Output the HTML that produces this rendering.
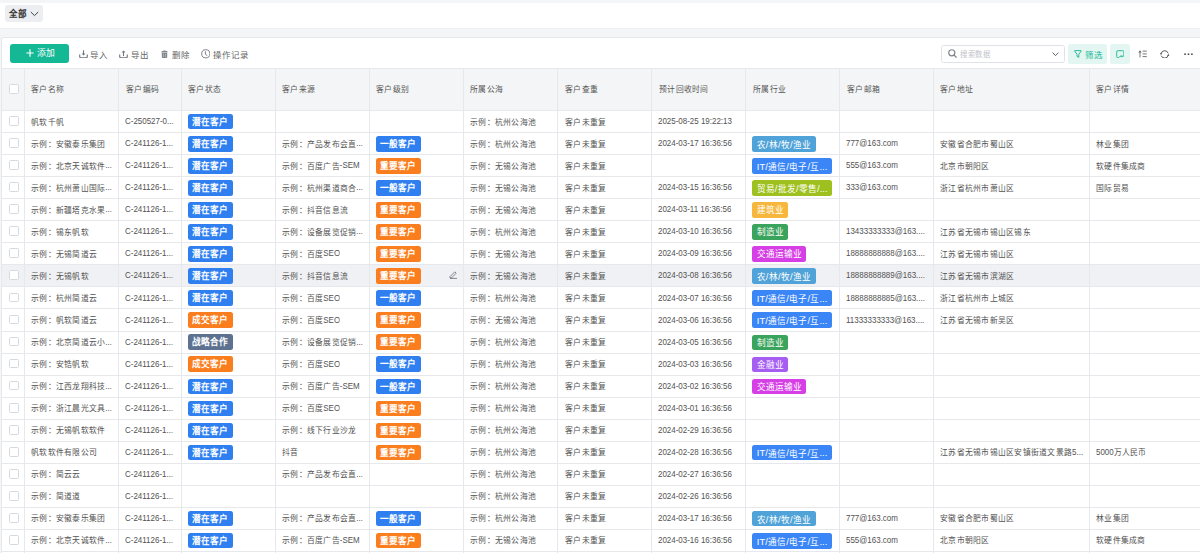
<!DOCTYPE html><html lang="zh-CN"><head><meta charset="utf-8"><style>
*{box-sizing:border-box;margin:0;padding:0}
html,body{width:1200px;height:553px;overflow:hidden;background:#f4f5f7;font-family:"Liberation Sans",sans-serif;}
.abs{position:absolute}
#top{position:absolute;left:0;top:2.5px;width:1200px;height:25.7px;background:#fff}
#all{position:absolute;left:4.6px;top:4.5px;width:38.2px;height:17.7px;background:#eceef2;border-radius:3px;font-size:8.6px;color:#222;}
#all span{position:absolute;left:4.6px;top:2.4px;font-weight:bold;color:#333;letter-spacing:0px}
#card{position:absolute;left:1px;top:37.4px;width:1250px;height:600px;background:#fff;border:1px solid #e6e8eb;border-radius:3px}
.tb{position:absolute;font-size:8.5px;color:#666;white-space:nowrap}
.cell{position:absolute;font-size:8.5px;transform:scaleX(0.917);transform-origin:0 0;color:#525252;white-space:nowrap;overflow:hidden}
.hd{position:absolute;font-size:8.5px;transform:scaleX(0.917);transform-origin:0 0;color:#555;white-space:nowrap}
.vl{position:absolute;width:1px;background:#e6e8eb}
.hl{position:absolute;height:1px;background:#e6e8eb;left:2px;width:1200px}
.tag{position:absolute;height:15.6px;border-radius:2.5px;color:#fff;font-size:8.6px;white-space:nowrap;padding:0 4.2px 0 4.6px;overflow:hidden;font-weight:bold}
.itag{position:absolute;height:15.6px;border-radius:2.5px;color:#fff;font-size:8.6px;white-space:nowrap;padding:0 4.6px;overflow:hidden;font-weight:normal}
.a{display:inline-block;white-space:nowrap}
.itag .a{margin:0 0.25px}
.ai{display:inline-block;transform-origin:0 0;white-space:nowrap;position:relative;top:-0.4px}
.cb{position:absolute;left:9.2px;width:9.8px;height:9.8px;border:1px solid #d6d9de;border-radius:1.5px;background:#fff}
</style></head><body>
<div id="top"></div><div class="abs" style="left:0;top:28.2px;width:1200px;height:1.2px;background:#eeeff2"></div>
<div id="all"><span>全部</span>
<svg class="abs" style="left:25.6px;top:6.6px" width="9" height="6" viewBox="0 0 9 6"><path d="M0.8 1 L4.5 4.6 L8.2 1" fill="none" stroke="#444" stroke-width="1"/></svg>
</div>
<div id="card"></div>

<div class="abs" style="left:9.7px;top:43.6px;width:59.5px;height:19.3px;background:#14b895;border-radius:3px"></div>
<svg class="abs" style="left:26px;top:49px" width="8" height="8" viewBox="0 0 8 8"><path d="M4 0.3V7.7M0.3 4H7.7" stroke="#fff" stroke-width="1.15"/></svg>
<div class="tb" style="left:37.2px;top:44.2px;height:18.9px;line-height:18.9px;color:#fff;font-size:8.8px">添加</div>
<svg class="abs" style="left:78.8px;top:49.6px" width="9" height="8.6" viewBox="0 0 9 8.6"><path d="M0.7 4.6V6.6Q0.7 7.9 2 7.9H7Q8.3 7.9 8.3 6.6V4.6" fill="none" stroke="#70757d" stroke-width="1.1"/><path d="M4.5 0.3V4" stroke="#70757d" stroke-width="1.1"/><path d="M2.5 3.4L4.5 5.6L6.5 3.4Z" fill="#70757d"/></svg>
<div class="tb" style="left:90.3px;top:45.6px;line-height:19px">导入</div>
<svg class="abs" style="left:119.2px;top:49.6px" width="9" height="8.6" viewBox="0 0 9 8.6"><path d="M0.7 4.6V6.6Q0.7 7.9 2 7.9H7Q8.3 7.9 8.3 6.6V4.6" fill="none" stroke="#70757d" stroke-width="1.1"/><path d="M4.5 6V2.2" stroke="#70757d" stroke-width="1.1"/><path d="M2.5 2.6L4.5 0.4L6.5 2.6Z" fill="#70757d"/></svg>
<div class="tb" style="left:130.8px;top:45.6px;line-height:19px">导出</div>
<svg class="abs" style="left:161.2px;top:50px" width="7" height="8.2" viewBox="0 0 7 8.2"><path d="M0.3 2.4Q0.5 0.4 3.5 0.4Q6.5 0.4 6.7 2.4Z" fill="#80858c"/><path d="M0.8 3H6.2V7Q6.2 8 5.2 8H1.8Q0.8 8 0.8 7Z" fill="#80858c"/><path d="M2.5 3.8V7.2M4.5 3.8V7.2" stroke="#c8ccd2" stroke-width="0.6"/></svg>
<div class="tb" style="left:171.7px;top:45.6px;line-height:19px">删除</div>
<svg class="abs" style="left:200.6px;top:49.4px" width="9.6" height="9.6" viewBox="0 0 9.6 9.6"><circle cx="4.8" cy="4.8" r="4.1" fill="none" stroke="#70757d" stroke-width="0.9"/><path d="M4.4 2.3V5.3L6.3 6.6" fill="none" stroke="#70757d" stroke-width="0.9"/></svg>
<div class="tb" style="left:213px;top:45.6px;line-height:19px">操作记录</div>
<div class="abs" style="left:940.8px;top:45.2px;width:124px;height:17.9px;border:1px solid #dfe2e6;border-radius:2.5px;background:#fff"></div>
<svg class="abs" style="left:947.8px;top:49.3px" width="9" height="9" viewBox="0 0 9 9"><circle cx="3.8" cy="3.8" r="3.05" fill="none" stroke="#80858c" stroke-width="1.2"/><path d="M6.1 6.1L8.2 8.2" stroke="#80858c" stroke-width="1.25" stroke-linecap="round"/></svg>
<div class="tb" style="left:959.7px;top:46.2px;line-height:17.2px;color:#bfc3ca;font-size:7.9px;transform:scaleX(0.94);transform-origin:0 0">搜索数据</div>
<svg class="abs" style="left:1052px;top:52.2px" width="7" height="4.5" viewBox="0 0 7 4.5"><path d="M0.6 0.6L3.5 3.6L6.4 0.6" fill="none" stroke="#555" stroke-width="0.9"/></svg>
<div class="abs" style="left:1068.4px;top:44.4px;width:38.9px;height:19.2px;background:#e3f6f1;border-radius:2.5px"></div>
<svg class="abs" style="left:1074.2px;top:50px" width="7.8" height="8" viewBox="0 0 7.8 8"><path d="M0.9 0.6H6.9Q7.4 0.6 7.1 1.1L4.8 4.3V7.3L3 6.4V4.3L0.7 1.1Q0.4 0.6 0.9 0.6Z" fill="none" stroke="#22b896" stroke-width="0.95" stroke-linejoin="round"/></svg>
<div class="tb" style="left:1085px;top:46.2px;line-height:19.2px;color:#14b895;font-size:8.5px">筛选</div>
<div class="abs" style="left:1110px;top:44.4px;width:19.8px;height:19.2px;background:#e3f6f1;border-radius:2.5px"></div>
<svg class="abs" style="left:1115.6px;top:49.8px" width="8.6" height="8.4" viewBox="0 0 8.6 8.4"><path d="M0.7 6.4V1.9Q0.7 0.7 1.9 0.7H6.7Q7.9 0.7 7.9 1.9V5.4Q7.9 6.6 6.7 6.6H4.2Q3.3 6.6 3.1 7.2Q2.9 7.8 2.2 7.8H1.9Q0.7 7.8 0.7 6.4Z" fill="none" stroke="#22b896" stroke-width="0.95" stroke-linejoin="round"/><circle cx="4.5" cy="5.4" r="0.45" fill="#22b896"/><circle cx="5.7" cy="5.4" r="0.45" fill="#22b896"/><circle cx="6.8" cy="5.4" r="0.45" fill="#22b896"/></svg>
<svg class="abs" style="left:1138.2px;top:50.4px" width="9" height="7.6" viewBox="0 0 9 7.6"><path d="M2 7.4V1.6" stroke="#666" stroke-width="0.9"/><path d="M0.3 2.4L2 0.2L3.7 2.4Z" fill="#666"/><path d="M4.6 1.1H8.8M4.6 3.9H8.8M4.6 6.6H8.8" stroke="#666" stroke-width="0.9"/></svg>
<svg class="abs" style="left:1160.4px;top:49.6px" width="9.4" height="8.8" viewBox="0 0 9.4 8.8"><path d="M1.1 3.6A3.7 3.7 0 0 1 8.2 3.2M8.3 5.2A3.7 3.7 0 0 1 1.2 5.6" fill="none" stroke="#555" stroke-width="1"/><path d="M0 2.9L2.3 3.3L0.9 5Z" fill="#555"/><path d="M9.4 5.9L7.1 5.5L8.5 3.8Z" fill="#555"/></svg>
<svg class="abs" style="left:1183.5px;top:53px" width="9" height="2.4" viewBox="0 0 9 2.4"><circle cx="1.1" cy="1.2" r="0.95" fill="#555"/><circle cx="4.5" cy="1.2" r="0.95" fill="#555"/><circle cx="7.9" cy="1.2" r="0.95" fill="#555"/></svg>
<div class="abs" style="left:2px;top:68.00px;width:1200px;height:42.50px;background:#f4f5f7"></div>
<div class="hl" style="top:67.50px"></div>
<div class="abs" style="left:2px;top:264.85px;width:1200px;height:22.05px;background:#f0f1f4"></div>
<div class="hl" style="top:110.00px"></div>
<div class="hl" style="top:132.05px"></div>
<div class="hl" style="top:154.10px"></div>
<div class="hl" style="top:176.15px"></div>
<div class="hl" style="top:198.20px"></div>
<div class="hl" style="top:220.25px"></div>
<div class="hl" style="top:242.30px"></div>
<div class="hl" style="top:264.35px"></div>
<div class="hl" style="top:286.40px"></div>
<div class="hl" style="top:308.45px"></div>
<div class="hl" style="top:330.50px"></div>
<div class="hl" style="top:352.55px"></div>
<div class="hl" style="top:374.60px"></div>
<div class="hl" style="top:396.65px"></div>
<div class="hl" style="top:418.70px"></div>
<div class="hl" style="top:440.75px"></div>
<div class="hl" style="top:462.80px"></div>
<div class="hl" style="top:484.85px"></div>
<div class="hl" style="top:506.90px"></div>
<div class="hl" style="top:528.95px"></div>
<div class="hl" style="top:551.00px"></div>
<div class="vl" style="left:23.90px;top:68.00px;height:500px"></div>
<div class="vl" style="left:118.00px;top:68.00px;height:500px"></div>
<div class="vl" style="left:180.80px;top:68.00px;height:500px"></div>
<div class="vl" style="left:274.90px;top:68.00px;height:500px"></div>
<div class="vl" style="left:368.80px;top:68.00px;height:500px"></div>
<div class="vl" style="left:462.80px;top:68.00px;height:500px"></div>
<div class="vl" style="left:557.00px;top:68.00px;height:500px"></div>
<div class="vl" style="left:651.20px;top:68.00px;height:500px"></div>
<div class="vl" style="left:745.20px;top:68.00px;height:500px"></div>
<div class="vl" style="left:839.20px;top:68.00px;height:500px"></div>
<div class="vl" style="left:932.90px;top:68.00px;height:500px"></div>
<div class="vl" style="left:1088.80px;top:68.00px;height:500px"></div>
<div class="cb" style="top:84.2px"></div>
<div class="hd" style="left:31.40px;top:68.00px;height:42.50px;line-height:42.50px">客户名称</div>
<div class="hd" style="left:125.50px;top:68.00px;height:42.50px;line-height:42.50px">客户编码</div>
<div class="hd" style="left:188.30px;top:68.00px;height:42.50px;line-height:42.50px">客户状态</div>
<div class="hd" style="left:282.40px;top:68.00px;height:42.50px;line-height:42.50px">客户来源</div>
<div class="hd" style="left:376.30px;top:68.00px;height:42.50px;line-height:42.50px">客户级别</div>
<div class="hd" style="left:470.30px;top:68.00px;height:42.50px;line-height:42.50px">所属公海</div>
<div class="hd" style="left:564.50px;top:68.00px;height:42.50px;line-height:42.50px">客户查重</div>
<div class="hd" style="left:658.70px;top:68.00px;height:42.50px;line-height:42.50px">预计回收时间</div>
<div class="hd" style="left:752.70px;top:68.00px;height:42.50px;line-height:42.50px">所属行业</div>
<div class="hd" style="left:846.70px;top:68.00px;height:42.50px;line-height:42.50px">客户邮箱</div>
<div class="hd" style="left:940.40px;top:68.00px;height:42.50px;line-height:42.50px">客户地址</div>
<div class="hd" style="left:1096.30px;top:68.00px;height:42.50px;line-height:42.50px">客户详情</div>
<div class="cb" style="top:116.10px"></div>
<div class="cell" style="left:31.40px;top:110.50px;height:22.05px;line-height:22.05px">帆软千帆</div>
<div class="cell" style="left:124.70px;top:110.50px;height:22.05px;line-height:22.05px"><span class="a" style="width:53.12px"><span class="ai" style="font-size:9.60px;transform:scaleX(0.905)">C-250527-0...</span></span></div>
<div class="tag" style="left:187.90px;top:113.90px;background:#2f7ff0;line-height:17.6px">潜在客户</div>
<div class="cell" style="left:470.30px;top:110.50px;height:22.05px;line-height:22.05px">示例：杭州公海池</div>
<div class="cell" style="left:564.50px;top:110.50px;height:22.05px;line-height:22.05px">客户未重复</div>
<div class="cell" style="left:657.90px;top:110.50px;height:22.05px;line-height:22.05px"><span class="a" style="width:80.67px"><span class="ai" style="font-size:9.60px;transform:scaleX(0.905)">2025-08-25&nbsp;19:22:13</span></span></div>
<div class="cb" style="top:138.15px"></div>
<div class="cell" style="left:31.40px;top:132.55px;height:22.05px;line-height:22.05px">示例：安徽泰乐集团</div>
<div class="cell" style="left:124.70px;top:132.55px;height:22.05px;line-height:22.05px"><span class="a" style="width:52.48px"><span class="ai" style="font-size:9.60px;transform:scaleX(0.905)">C-241126-1...</span></span></div>
<div class="tag" style="left:187.90px;top:135.95px;background:#2f7ff0;line-height:17.6px">潜在客户</div>
<div class="cell" style="left:282.40px;top:132.55px;height:22.05px;line-height:22.05px">示例：产品发布会直<span class="a" style="width:7.24px"><span class="ai" style="font-size:9.60px;transform:scaleX(0.905)">...</span></span></div>
<div class="tag" style="left:375.90px;top:135.95px;background:#2f7ff0;line-height:17.6px">一般客户</div>
<div class="cell" style="left:470.30px;top:132.55px;height:22.05px;line-height:22.05px">示例：杭州公海池</div>
<div class="cell" style="left:564.50px;top:132.55px;height:22.05px;line-height:22.05px">客户未重复</div>
<div class="cell" style="left:657.90px;top:132.55px;height:22.05px;line-height:22.05px"><span class="a" style="width:80.67px"><span class="ai" style="font-size:9.60px;transform:scaleX(0.905)">2024-03-17&nbsp;16:36:56</span></span></div>
<div class="itag" style="left:752.00px;top:136.05px;background:#4fa3d8;line-height:17.8px;">农<span class="a" style="width:2.61px"><span class="ai" style="font-size:9.40px;transform:scaleX(1.000)">/</span></span>林<span class="a" style="width:2.61px"><span class="ai" style="font-size:9.40px;transform:scaleX(1.000)">/</span></span>牧<span class="a" style="width:2.61px"><span class="ai" style="font-size:9.40px;transform:scaleX(1.000)">/</span></span>渔业</div>
<div class="cell" style="left:845.90px;top:132.55px;height:22.05px;line-height:22.05px"><span class="a" style="width:56.63px"><span class="ai" style="font-size:9.60px;transform:scaleX(0.905)">777@163.com</span></span></div>
<div class="cell" style="left:940.40px;top:132.55px;height:22.05px;line-height:22.05px">安徽省合肥市蜀山区</div>
<div class="cell" style="left:1096.30px;top:132.55px;height:22.05px;line-height:22.05px">林业集团</div>
<div class="cb" style="top:160.20px"></div>
<div class="cell" style="left:31.40px;top:154.60px;height:22.05px;line-height:22.05px">示例：北京天诚软件<span class="a" style="width:7.24px"><span class="ai" style="font-size:9.60px;transform:scaleX(0.905)">...</span></span></div>
<div class="cell" style="left:124.70px;top:154.60px;height:22.05px;line-height:22.05px"><span class="a" style="width:52.48px"><span class="ai" style="font-size:9.60px;transform:scaleX(0.905)">C-241126-1...</span></span></div>
<div class="tag" style="left:187.90px;top:158.00px;background:#2f7ff0;line-height:17.6px">潜在客户</div>
<div class="cell" style="left:282.40px;top:154.60px;height:22.05px;line-height:22.05px">示例：百度广告<span class="a" style="width:21.72px"><span class="ai" style="font-size:9.60px;transform:scaleX(0.905)">-SEM</span></span></div>
<div class="tag" style="left:375.90px;top:158.00px;background:#fa7d1e;line-height:17.6px">重要客户</div>
<div class="cell" style="left:470.30px;top:154.60px;height:22.05px;line-height:22.05px">示例：无锡公海池</div>
<div class="cell" style="left:564.50px;top:154.60px;height:22.05px;line-height:22.05px">客户未重复</div>
<div class="itag" style="left:752.00px;top:158.10px;background:#3b86f7;line-height:17.8px;width:80px;"><span class="a" style="width:10.96px"><span class="ai" style="font-size:9.40px;transform:scaleX(1.000)">IT/</span></span>通信<span class="a" style="width:2.61px"><span class="ai" style="font-size:9.40px;transform:scaleX(1.000)">/</span></span>电子<span class="a" style="width:2.61px"><span class="ai" style="font-size:9.40px;transform:scaleX(1.000)">/</span></span>互<span class="a" style="width:7.83px"><span class="ai" style="font-size:9.40px;transform:scaleX(1.000)">...</span></span></div>
<div class="cell" style="left:845.90px;top:154.60px;height:22.05px;line-height:22.05px"><span class="a" style="width:56.63px"><span class="ai" style="font-size:9.60px;transform:scaleX(0.905)">555@163.com</span></span></div>
<div class="cell" style="left:940.40px;top:154.60px;height:22.05px;line-height:22.05px">北京市朝阳区</div>
<div class="cell" style="left:1096.30px;top:154.60px;height:22.05px;line-height:22.05px">软硬件集成商</div>
<div class="cb" style="top:182.25px"></div>
<div class="cell" style="left:31.40px;top:176.65px;height:22.05px;line-height:22.05px">示例：杭州萧山国际<span class="a" style="width:7.24px"><span class="ai" style="font-size:9.60px;transform:scaleX(0.905)">...</span></span></div>
<div class="cell" style="left:124.70px;top:176.65px;height:22.05px;line-height:22.05px"><span class="a" style="width:52.48px"><span class="ai" style="font-size:9.60px;transform:scaleX(0.905)">C-241126-1...</span></span></div>
<div class="tag" style="left:187.90px;top:180.05px;background:#2f7ff0;line-height:17.6px">潜在客户</div>
<div class="cell" style="left:282.40px;top:176.65px;height:22.05px;line-height:22.05px">示例：杭州渠道商合<span class="a" style="width:7.24px"><span class="ai" style="font-size:9.60px;transform:scaleX(0.905)">...</span></span></div>
<div class="tag" style="left:375.90px;top:180.05px;background:#2f7ff0;line-height:17.6px">一般客户</div>
<div class="cell" style="left:470.30px;top:176.65px;height:22.05px;line-height:22.05px">示例：无锡公海池</div>
<div class="cell" style="left:564.50px;top:176.65px;height:22.05px;line-height:22.05px">客户未重复</div>
<div class="cell" style="left:657.90px;top:176.65px;height:22.05px;line-height:22.05px"><span class="a" style="width:80.67px"><span class="ai" style="font-size:9.60px;transform:scaleX(0.905)">2024-03-15&nbsp;16:36:56</span></span></div>
<div class="itag" style="left:752.00px;top:180.15px;background:#9fc11f;line-height:17.8px;width:80px;">贸易<span class="a" style="width:2.61px"><span class="ai" style="font-size:9.40px;transform:scaleX(1.000)">/</span></span>批发<span class="a" style="width:2.61px"><span class="ai" style="font-size:9.40px;transform:scaleX(1.000)">/</span></span>零售<span class="a" style="width:10.45px"><span class="ai" style="font-size:9.40px;transform:scaleX(1.000)">/...</span></span></div>
<div class="cell" style="left:845.90px;top:176.65px;height:22.05px;line-height:22.05px"><span class="a" style="width:56.63px"><span class="ai" style="font-size:9.60px;transform:scaleX(0.905)">333@163.com</span></span></div>
<div class="cell" style="left:940.40px;top:176.65px;height:22.05px;line-height:22.05px">浙江省杭州市萧山区</div>
<div class="cell" style="left:1096.30px;top:176.65px;height:22.05px;line-height:22.05px">国际贸易</div>
<div class="cb" style="top:204.30px"></div>
<div class="cell" style="left:31.40px;top:198.70px;height:22.05px;line-height:22.05px">示例：新疆塔克水果<span class="a" style="width:7.24px"><span class="ai" style="font-size:9.60px;transform:scaleX(0.905)">...</span></span></div>
<div class="cell" style="left:124.70px;top:198.70px;height:22.05px;line-height:22.05px"><span class="a" style="width:52.48px"><span class="ai" style="font-size:9.60px;transform:scaleX(0.905)">C-241126-1...</span></span></div>
<div class="tag" style="left:187.90px;top:202.10px;background:#2f7ff0;line-height:17.6px">潜在客户</div>
<div class="cell" style="left:282.40px;top:198.70px;height:22.05px;line-height:22.05px">示例：抖音信息流</div>
<div class="tag" style="left:375.90px;top:202.10px;background:#fa7d1e;line-height:17.6px">重要客户</div>
<div class="cell" style="left:470.30px;top:198.70px;height:22.05px;line-height:22.05px">示例：无锡公海池</div>
<div class="cell" style="left:564.50px;top:198.70px;height:22.05px;line-height:22.05px">客户未重复</div>
<div class="cell" style="left:657.90px;top:198.70px;height:22.05px;line-height:22.05px"><span class="a" style="width:80.02px"><span class="ai" style="font-size:9.60px;transform:scaleX(0.905)">2024-03-11&nbsp;16:36:56</span></span></div>
<div class="itag" style="left:752.00px;top:202.20px;background:#f6b73c;line-height:17.8px;">建筑业</div>
<div class="cb" style="top:226.35px"></div>
<div class="cell" style="left:31.40px;top:220.75px;height:22.05px;line-height:22.05px">示例：锡东帆软</div>
<div class="cell" style="left:124.70px;top:220.75px;height:22.05px;line-height:22.05px"><span class="a" style="width:52.48px"><span class="ai" style="font-size:9.60px;transform:scaleX(0.905)">C-241126-1...</span></span></div>
<div class="tag" style="left:187.90px;top:224.15px;background:#2f7ff0;line-height:17.6px">潜在客户</div>
<div class="cell" style="left:282.40px;top:220.75px;height:22.05px;line-height:22.05px">示例：设备展览促销<span class="a" style="width:7.24px"><span class="ai" style="font-size:9.60px;transform:scaleX(0.905)">...</span></span></div>
<div class="tag" style="left:375.90px;top:224.15px;background:#fa7d1e;line-height:17.6px">重要客户</div>
<div class="cell" style="left:470.30px;top:220.75px;height:22.05px;line-height:22.05px">示例：杭州公海池</div>
<div class="cell" style="left:564.50px;top:220.75px;height:22.05px;line-height:22.05px">客户未重复</div>
<div class="cell" style="left:657.90px;top:220.75px;height:22.05px;line-height:22.05px"><span class="a" style="width:80.67px"><span class="ai" style="font-size:9.60px;transform:scaleX(0.905)">2024-03-10&nbsp;16:36:56</span></span></div>
<div class="itag" style="left:752.00px;top:224.25px;background:#3aa35c;line-height:17.8px;">制造业</div>
<div class="cell" style="left:845.90px;top:220.75px;height:22.05px;line-height:22.05px"><span class="a" style="width:86.11px"><span class="ai" style="font-size:9.60px;transform:scaleX(0.905)">13433333333@163....</span></span></div>
<div class="cell" style="left:940.40px;top:220.75px;height:22.05px;line-height:22.05px">江苏省无锡市锡山区锡东</div>
<div class="cb" style="top:248.40px"></div>
<div class="cell" style="left:31.40px;top:242.80px;height:22.05px;line-height:22.05px">示例：无锡简道云</div>
<div class="cell" style="left:124.70px;top:242.80px;height:22.05px;line-height:22.05px"><span class="a" style="width:52.48px"><span class="ai" style="font-size:9.60px;transform:scaleX(0.905)">C-241126-1...</span></span></div>
<div class="tag" style="left:187.90px;top:246.20px;background:#2f7ff0;line-height:17.6px">潜在客户</div>
<div class="cell" style="left:282.40px;top:242.80px;height:22.05px;line-height:22.05px">示例：百度<span class="a" style="width:18.35px"><span class="ai" style="font-size:9.60px;transform:scaleX(0.905)">SEO</span></span></div>
<div class="tag" style="left:375.90px;top:246.20px;background:#fa7d1e;line-height:17.6px">重要客户</div>
<div class="cell" style="left:470.30px;top:242.80px;height:22.05px;line-height:22.05px">示例：无锡公海池</div>
<div class="cell" style="left:564.50px;top:242.80px;height:22.05px;line-height:22.05px">客户未重复</div>
<div class="cell" style="left:657.90px;top:242.80px;height:22.05px;line-height:22.05px"><span class="a" style="width:80.67px"><span class="ai" style="font-size:9.60px;transform:scaleX(0.905)">2024-03-09&nbsp;16:36:56</span></span></div>
<div class="itag" style="left:752.00px;top:246.30px;background:#d63fe6;line-height:17.8px;">交通运输业</div>
<div class="cell" style="left:845.90px;top:242.80px;height:22.05px;line-height:22.05px"><span class="a" style="width:86.11px"><span class="ai" style="font-size:9.60px;transform:scaleX(0.905)">18888888888@163....</span></span></div>
<div class="cell" style="left:940.40px;top:242.80px;height:22.05px;line-height:22.05px">江苏省无锡市锡山区</div>
<div class="cb" style="top:270.45px"></div>
<div class="cell" style="left:31.40px;top:264.85px;height:22.05px;line-height:22.05px">示例：无锡帆软</div>
<div class="cell" style="left:124.70px;top:264.85px;height:22.05px;line-height:22.05px"><span class="a" style="width:52.48px"><span class="ai" style="font-size:9.60px;transform:scaleX(0.905)">C-241126-1...</span></span></div>
<div class="tag" style="left:187.90px;top:268.25px;background:#2f7ff0;line-height:17.6px">潜在客户</div>
<div class="cell" style="left:282.40px;top:264.85px;height:22.05px;line-height:22.05px">示例：抖音信息流</div>
<div class="tag" style="left:375.90px;top:268.25px;background:#fa7d1e;line-height:17.6px">重要客户</div>
<div class="cell" style="left:470.30px;top:264.85px;height:22.05px;line-height:22.05px">示例：无锡公海池</div>
<div class="cell" style="left:564.50px;top:264.85px;height:22.05px;line-height:22.05px">客户未重复</div>
<div class="cell" style="left:657.90px;top:264.85px;height:22.05px;line-height:22.05px"><span class="a" style="width:80.67px"><span class="ai" style="font-size:9.60px;transform:scaleX(0.905)">2024-03-08&nbsp;16:36:56</span></span></div>
<div class="itag" style="left:752.00px;top:268.35px;background:#4fa3d8;line-height:17.8px;">农<span class="a" style="width:2.61px"><span class="ai" style="font-size:9.40px;transform:scaleX(1.000)">/</span></span>林<span class="a" style="width:2.61px"><span class="ai" style="font-size:9.40px;transform:scaleX(1.000)">/</span></span>牧<span class="a" style="width:2.61px"><span class="ai" style="font-size:9.40px;transform:scaleX(1.000)">/</span></span>渔业</div>
<div class="cell" style="left:845.90px;top:264.85px;height:22.05px;line-height:22.05px"><span class="a" style="width:86.11px"><span class="ai" style="font-size:9.60px;transform:scaleX(0.905)">18888888889@163....</span></span></div>
<div class="cell" style="left:940.40px;top:264.85px;height:22.05px;line-height:22.05px">江苏省无锡市滨湖区</div>
<div class="cb" style="top:292.50px"></div>
<div class="cell" style="left:31.40px;top:286.90px;height:22.05px;line-height:22.05px">示例：杭州简道云</div>
<div class="cell" style="left:124.70px;top:286.90px;height:22.05px;line-height:22.05px"><span class="a" style="width:52.48px"><span class="ai" style="font-size:9.60px;transform:scaleX(0.905)">C-241126-1...</span></span></div>
<div class="tag" style="left:187.90px;top:290.30px;background:#2f7ff0;line-height:17.6px">潜在客户</div>
<div class="cell" style="left:282.40px;top:286.90px;height:22.05px;line-height:22.05px">示例：百度<span class="a" style="width:18.35px"><span class="ai" style="font-size:9.60px;transform:scaleX(0.905)">SEO</span></span></div>
<div class="tag" style="left:375.90px;top:290.30px;background:#2f7ff0;line-height:17.6px">一般客户</div>
<div class="cell" style="left:470.30px;top:286.90px;height:22.05px;line-height:22.05px">示例：杭州公海池</div>
<div class="cell" style="left:564.50px;top:286.90px;height:22.05px;line-height:22.05px">客户未重复</div>
<div class="cell" style="left:657.90px;top:286.90px;height:22.05px;line-height:22.05px"><span class="a" style="width:80.67px"><span class="ai" style="font-size:9.60px;transform:scaleX(0.905)">2024-03-07&nbsp;16:36:56</span></span></div>
<div class="itag" style="left:752.00px;top:290.40px;background:#3b86f7;line-height:17.8px;width:80px;"><span class="a" style="width:10.96px"><span class="ai" style="font-size:9.40px;transform:scaleX(1.000)">IT/</span></span>通信<span class="a" style="width:2.61px"><span class="ai" style="font-size:9.40px;transform:scaleX(1.000)">/</span></span>电子<span class="a" style="width:2.61px"><span class="ai" style="font-size:9.40px;transform:scaleX(1.000)">/</span></span>互<span class="a" style="width:7.83px"><span class="ai" style="font-size:9.40px;transform:scaleX(1.000)">...</span></span></div>
<div class="cell" style="left:845.90px;top:286.90px;height:22.05px;line-height:22.05px"><span class="a" style="width:86.11px"><span class="ai" style="font-size:9.60px;transform:scaleX(0.905)">18888888885@163....</span></span></div>
<div class="cell" style="left:940.40px;top:286.90px;height:22.05px;line-height:22.05px">浙江省杭州市上城区</div>
<div class="cb" style="top:314.55px"></div>
<div class="cell" style="left:31.40px;top:308.95px;height:22.05px;line-height:22.05px">示例：帆软简道云</div>
<div class="cell" style="left:124.70px;top:308.95px;height:22.05px;line-height:22.05px"><span class="a" style="width:52.48px"><span class="ai" style="font-size:9.60px;transform:scaleX(0.905)">C-241126-1...</span></span></div>
<div class="tag" style="left:187.90px;top:312.35px;background:#fa7d1e;line-height:17.6px">成交客户</div>
<div class="cell" style="left:282.40px;top:308.95px;height:22.05px;line-height:22.05px">示例：百度<span class="a" style="width:18.35px"><span class="ai" style="font-size:9.60px;transform:scaleX(0.905)">SEO</span></span></div>
<div class="tag" style="left:375.90px;top:312.35px;background:#fa7d1e;line-height:17.6px">重要客户</div>
<div class="cell" style="left:470.30px;top:308.95px;height:22.05px;line-height:22.05px">示例：无锡公海池</div>
<div class="cell" style="left:564.50px;top:308.95px;height:22.05px;line-height:22.05px">客户未重复</div>
<div class="cell" style="left:657.90px;top:308.95px;height:22.05px;line-height:22.05px"><span class="a" style="width:80.67px"><span class="ai" style="font-size:9.60px;transform:scaleX(0.905)">2024-03-06&nbsp;16:36:56</span></span></div>
<div class="itag" style="left:752.00px;top:312.45px;background:#3b86f7;line-height:17.8px;width:80px;"><span class="a" style="width:10.96px"><span class="ai" style="font-size:9.40px;transform:scaleX(1.000)">IT/</span></span>通信<span class="a" style="width:2.61px"><span class="ai" style="font-size:9.40px;transform:scaleX(1.000)">/</span></span>电子<span class="a" style="width:2.61px"><span class="ai" style="font-size:9.40px;transform:scaleX(1.000)">/</span></span>互<span class="a" style="width:7.83px"><span class="ai" style="font-size:9.40px;transform:scaleX(1.000)">...</span></span></div>
<div class="cell" style="left:845.90px;top:308.95px;height:22.05px;line-height:22.05px"><span class="a" style="width:85.47px"><span class="ai" style="font-size:9.60px;transform:scaleX(0.905)">11333333333@163....</span></span></div>
<div class="cell" style="left:940.40px;top:308.95px;height:22.05px;line-height:22.05px">江苏省无锡市新吴区</div>
<div class="cb" style="top:336.60px"></div>
<div class="cell" style="left:31.40px;top:331.00px;height:22.05px;line-height:22.05px">示例：北京简道云小<span class="a" style="width:7.24px"><span class="ai" style="font-size:9.60px;transform:scaleX(0.905)">...</span></span></div>
<div class="cell" style="left:124.70px;top:331.00px;height:22.05px;line-height:22.05px"><span class="a" style="width:52.48px"><span class="ai" style="font-size:9.60px;transform:scaleX(0.905)">C-241126-1...</span></span></div>
<div class="tag" style="left:187.90px;top:334.40px;background:#5d7290;line-height:17.6px">战略合作</div>
<div class="cell" style="left:282.40px;top:331.00px;height:22.05px;line-height:22.05px">示例：设备展览促销<span class="a" style="width:7.24px"><span class="ai" style="font-size:9.60px;transform:scaleX(0.905)">...</span></span></div>
<div class="tag" style="left:375.90px;top:334.40px;background:#fa7d1e;line-height:17.6px">重要客户</div>
<div class="cell" style="left:470.30px;top:331.00px;height:22.05px;line-height:22.05px">示例：杭州公海池</div>
<div class="cell" style="left:564.50px;top:331.00px;height:22.05px;line-height:22.05px">客户未重复</div>
<div class="cell" style="left:657.90px;top:331.00px;height:22.05px;line-height:22.05px"><span class="a" style="width:80.67px"><span class="ai" style="font-size:9.60px;transform:scaleX(0.905)">2024-03-05&nbsp;16:36:56</span></span></div>
<div class="itag" style="left:752.00px;top:334.50px;background:#3aa35c;line-height:17.8px;">制造业</div>
<div class="cb" style="top:358.65px"></div>
<div class="cell" style="left:31.40px;top:353.05px;height:22.05px;line-height:22.05px">示例：安锆帆软</div>
<div class="cell" style="left:124.70px;top:353.05px;height:22.05px;line-height:22.05px"><span class="a" style="width:52.48px"><span class="ai" style="font-size:9.60px;transform:scaleX(0.905)">C-241126-1...</span></span></div>
<div class="tag" style="left:187.90px;top:356.45px;background:#fa7d1e;line-height:17.6px">成交客户</div>
<div class="cell" style="left:282.40px;top:353.05px;height:22.05px;line-height:22.05px">示例：百度<span class="a" style="width:18.35px"><span class="ai" style="font-size:9.60px;transform:scaleX(0.905)">SEO</span></span></div>
<div class="tag" style="left:375.90px;top:356.45px;background:#2f7ff0;line-height:17.6px">一般客户</div>
<div class="cell" style="left:470.30px;top:353.05px;height:22.05px;line-height:22.05px">示例：杭州公海池</div>
<div class="cell" style="left:564.50px;top:353.05px;height:22.05px;line-height:22.05px">客户未重复</div>
<div class="cell" style="left:657.90px;top:353.05px;height:22.05px;line-height:22.05px"><span class="a" style="width:80.67px"><span class="ai" style="font-size:9.60px;transform:scaleX(0.905)">2024-03-03&nbsp;16:36:56</span></span></div>
<div class="itag" style="left:752.00px;top:356.55px;background:#a55df2;line-height:17.8px;">金融业</div>
<div class="cb" style="top:380.70px"></div>
<div class="cell" style="left:31.40px;top:375.10px;height:22.05px;line-height:22.05px">示例：江西龙翔科技<span class="a" style="width:7.24px"><span class="ai" style="font-size:9.60px;transform:scaleX(0.905)">...</span></span></div>
<div class="cell" style="left:124.70px;top:375.10px;height:22.05px;line-height:22.05px"><span class="a" style="width:52.48px"><span class="ai" style="font-size:9.60px;transform:scaleX(0.905)">C-241126-1...</span></span></div>
<div class="tag" style="left:187.90px;top:378.50px;background:#2f7ff0;line-height:17.6px">潜在客户</div>
<div class="cell" style="left:282.40px;top:375.10px;height:22.05px;line-height:22.05px">示例：百度广告<span class="a" style="width:21.72px"><span class="ai" style="font-size:9.60px;transform:scaleX(0.905)">-SEM</span></span></div>
<div class="tag" style="left:375.90px;top:378.50px;background:#2f7ff0;line-height:17.6px">一般客户</div>
<div class="cell" style="left:470.30px;top:375.10px;height:22.05px;line-height:22.05px">示例：杭州公海池</div>
<div class="cell" style="left:564.50px;top:375.10px;height:22.05px;line-height:22.05px">客户未重复</div>
<div class="cell" style="left:657.90px;top:375.10px;height:22.05px;line-height:22.05px"><span class="a" style="width:80.67px"><span class="ai" style="font-size:9.60px;transform:scaleX(0.905)">2024-03-02&nbsp;16:36:56</span></span></div>
<div class="itag" style="left:752.00px;top:378.60px;background:#d63fe6;line-height:17.8px;">交通运输业</div>
<div class="cb" style="top:402.75px"></div>
<div class="cell" style="left:31.40px;top:397.15px;height:22.05px;line-height:22.05px">示例：浙江晨光文具<span class="a" style="width:7.24px"><span class="ai" style="font-size:9.60px;transform:scaleX(0.905)">...</span></span></div>
<div class="cell" style="left:124.70px;top:397.15px;height:22.05px;line-height:22.05px"><span class="a" style="width:52.48px"><span class="ai" style="font-size:9.60px;transform:scaleX(0.905)">C-241126-1...</span></span></div>
<div class="tag" style="left:187.90px;top:400.55px;background:#2f7ff0;line-height:17.6px">潜在客户</div>
<div class="cell" style="left:282.40px;top:397.15px;height:22.05px;line-height:22.05px">示例：百度<span class="a" style="width:18.35px"><span class="ai" style="font-size:9.60px;transform:scaleX(0.905)">SEO</span></span></div>
<div class="tag" style="left:375.90px;top:400.55px;background:#fa7d1e;line-height:17.6px">重要客户</div>
<div class="cell" style="left:470.30px;top:397.15px;height:22.05px;line-height:22.05px">示例：杭州公海池</div>
<div class="cell" style="left:564.50px;top:397.15px;height:22.05px;line-height:22.05px">客户未重复</div>
<div class="cell" style="left:657.90px;top:397.15px;height:22.05px;line-height:22.05px"><span class="a" style="width:80.67px"><span class="ai" style="font-size:9.60px;transform:scaleX(0.905)">2024-03-01&nbsp;16:36:56</span></span></div>
<div class="cb" style="top:424.80px"></div>
<div class="cell" style="left:31.40px;top:419.20px;height:22.05px;line-height:22.05px">示例：无锡帆软软件</div>
<div class="cell" style="left:124.70px;top:419.20px;height:22.05px;line-height:22.05px"><span class="a" style="width:52.48px"><span class="ai" style="font-size:9.60px;transform:scaleX(0.905)">C-241126-1...</span></span></div>
<div class="tag" style="left:187.90px;top:422.60px;background:#2f7ff0;line-height:17.6px">潜在客户</div>
<div class="cell" style="left:282.40px;top:419.20px;height:22.05px;line-height:22.05px">示例：线下行业沙龙</div>
<div class="tag" style="left:375.90px;top:422.60px;background:#fa7d1e;line-height:17.6px">重要客户</div>
<div class="cell" style="left:470.30px;top:419.20px;height:22.05px;line-height:22.05px">示例：杭州公海池</div>
<div class="cell" style="left:564.50px;top:419.20px;height:22.05px;line-height:22.05px">客户未重复</div>
<div class="cell" style="left:657.90px;top:419.20px;height:22.05px;line-height:22.05px"><span class="a" style="width:80.67px"><span class="ai" style="font-size:9.60px;transform:scaleX(0.905)">2024-02-29&nbsp;16:36:56</span></span></div>
<div class="cb" style="top:446.85px"></div>
<div class="cell" style="left:31.40px;top:441.25px;height:22.05px;line-height:22.05px">帆软软件有限公司</div>
<div class="cell" style="left:124.70px;top:441.25px;height:22.05px;line-height:22.05px"><span class="a" style="width:52.48px"><span class="ai" style="font-size:9.60px;transform:scaleX(0.905)">C-241126-1...</span></span></div>
<div class="tag" style="left:187.90px;top:444.65px;background:#2f7ff0;line-height:17.6px">潜在客户</div>
<div class="cell" style="left:282.40px;top:441.25px;height:22.05px;line-height:22.05px">抖音</div>
<div class="tag" style="left:375.90px;top:444.65px;background:#fa7d1e;line-height:17.6px">重要客户</div>
<div class="cell" style="left:470.30px;top:441.25px;height:22.05px;line-height:22.05px">示例：杭州公海池</div>
<div class="cell" style="left:564.50px;top:441.25px;height:22.05px;line-height:22.05px">客户未重复</div>
<div class="cell" style="left:657.90px;top:441.25px;height:22.05px;line-height:22.05px"><span class="a" style="width:80.67px"><span class="ai" style="font-size:9.60px;transform:scaleX(0.905)">2024-02-28&nbsp;16:36:56</span></span></div>
<div class="itag" style="left:752.00px;top:444.75px;background:#3b86f7;line-height:17.8px;width:80px;"><span class="a" style="width:10.96px"><span class="ai" style="font-size:9.40px;transform:scaleX(1.000)">IT/</span></span>通信<span class="a" style="width:2.61px"><span class="ai" style="font-size:9.40px;transform:scaleX(1.000)">/</span></span>电子<span class="a" style="width:2.61px"><span class="ai" style="font-size:9.40px;transform:scaleX(1.000)">/</span></span>互<span class="a" style="width:7.83px"><span class="ai" style="font-size:9.40px;transform:scaleX(1.000)">...</span></span></div>
<div class="cell" style="left:940.40px;top:441.25px;height:22.05px;line-height:22.05px">江苏省无锡市锡山区安镇街道文景路<span class="a" style="width:12.07px"><span class="ai" style="font-size:9.60px;transform:scaleX(0.905)">5...</span></span></div>
<div class="cell" style="left:1095.50px;top:441.25px;height:22.05px;line-height:22.05px"><span class="a" style="width:19.33px"><span class="ai" style="font-size:9.60px;transform:scaleX(0.905)">5000</span></span>万人民币</div>
<div class="cb" style="top:468.90px"></div>
<div class="cell" style="left:31.40px;top:463.30px;height:22.05px;line-height:22.05px">示例：简云云</div>
<div class="cell" style="left:124.70px;top:463.30px;height:22.05px;line-height:22.05px"><span class="a" style="width:52.48px"><span class="ai" style="font-size:9.60px;transform:scaleX(0.905)">C-241126-1...</span></span></div>
<div class="cell" style="left:282.40px;top:463.30px;height:22.05px;line-height:22.05px">示例：产品发布会直<span class="a" style="width:7.24px"><span class="ai" style="font-size:9.60px;transform:scaleX(0.905)">...</span></span></div>
<div class="cell" style="left:470.30px;top:463.30px;height:22.05px;line-height:22.05px">示例：杭州公海池</div>
<div class="cell" style="left:564.50px;top:463.30px;height:22.05px;line-height:22.05px">客户未重复</div>
<div class="cell" style="left:657.90px;top:463.30px;height:22.05px;line-height:22.05px"><span class="a" style="width:80.67px"><span class="ai" style="font-size:9.60px;transform:scaleX(0.905)">2024-02-27&nbsp;16:36:56</span></span></div>
<div class="cb" style="top:490.95px"></div>
<div class="cell" style="left:31.40px;top:485.35px;height:22.05px;line-height:22.05px">示例：简道道</div>
<div class="cell" style="left:124.70px;top:485.35px;height:22.05px;line-height:22.05px"><span class="a" style="width:52.48px"><span class="ai" style="font-size:9.60px;transform:scaleX(0.905)">C-241126-1...</span></span></div>
<div class="cell" style="left:470.30px;top:485.35px;height:22.05px;line-height:22.05px">示例：杭州公海池</div>
<div class="cell" style="left:564.50px;top:485.35px;height:22.05px;line-height:22.05px">客户未重复</div>
<div class="cell" style="left:657.90px;top:485.35px;height:22.05px;line-height:22.05px"><span class="a" style="width:80.67px"><span class="ai" style="font-size:9.60px;transform:scaleX(0.905)">2024-02-26&nbsp;16:36:56</span></span></div>
<div class="cb" style="top:513.00px"></div>
<div class="cell" style="left:31.40px;top:507.40px;height:22.05px;line-height:22.05px">示例：安徽泰乐集团</div>
<div class="cell" style="left:124.70px;top:507.40px;height:22.05px;line-height:22.05px"><span class="a" style="width:52.48px"><span class="ai" style="font-size:9.60px;transform:scaleX(0.905)">C-241126-1...</span></span></div>
<div class="tag" style="left:187.90px;top:510.80px;background:#2f7ff0;line-height:17.6px">潜在客户</div>
<div class="cell" style="left:282.40px;top:507.40px;height:22.05px;line-height:22.05px">示例：产品发布会直<span class="a" style="width:7.24px"><span class="ai" style="font-size:9.60px;transform:scaleX(0.905)">...</span></span></div>
<div class="tag" style="left:375.90px;top:510.80px;background:#2f7ff0;line-height:17.6px">一般客户</div>
<div class="cell" style="left:470.30px;top:507.40px;height:22.05px;line-height:22.05px">示例：杭州公海池</div>
<div class="cell" style="left:564.50px;top:507.40px;height:22.05px;line-height:22.05px">客户未重复</div>
<div class="cell" style="left:657.90px;top:507.40px;height:22.05px;line-height:22.05px"><span class="a" style="width:80.67px"><span class="ai" style="font-size:9.60px;transform:scaleX(0.905)">2024-03-17&nbsp;16:36:56</span></span></div>
<div class="itag" style="left:752.00px;top:510.90px;background:#4fa3d8;line-height:17.8px;">农<span class="a" style="width:2.61px"><span class="ai" style="font-size:9.40px;transform:scaleX(1.000)">/</span></span>林<span class="a" style="width:2.61px"><span class="ai" style="font-size:9.40px;transform:scaleX(1.000)">/</span></span>牧<span class="a" style="width:2.61px"><span class="ai" style="font-size:9.40px;transform:scaleX(1.000)">/</span></span>渔业</div>
<div class="cell" style="left:845.90px;top:507.40px;height:22.05px;line-height:22.05px"><span class="a" style="width:56.63px"><span class="ai" style="font-size:9.60px;transform:scaleX(0.905)">777@163.com</span></span></div>
<div class="cell" style="left:940.40px;top:507.40px;height:22.05px;line-height:22.05px">安徽省合肥市蜀山区</div>
<div class="cell" style="left:1096.30px;top:507.40px;height:22.05px;line-height:22.05px">林业集团</div>
<div class="cb" style="top:535.05px"></div>
<div class="cell" style="left:31.40px;top:529.45px;height:22.05px;line-height:22.05px">示例：北京天诚软件<span class="a" style="width:7.24px"><span class="ai" style="font-size:9.60px;transform:scaleX(0.905)">...</span></span></div>
<div class="cell" style="left:124.70px;top:529.45px;height:22.05px;line-height:22.05px"><span class="a" style="width:52.48px"><span class="ai" style="font-size:9.60px;transform:scaleX(0.905)">C-241126-1...</span></span></div>
<div class="tag" style="left:187.90px;top:532.85px;background:#2f7ff0;line-height:17.6px">潜在客户</div>
<div class="cell" style="left:282.40px;top:529.45px;height:22.05px;line-height:22.05px">示例：百度广告<span class="a" style="width:21.72px"><span class="ai" style="font-size:9.60px;transform:scaleX(0.905)">-SEM</span></span></div>
<div class="tag" style="left:375.90px;top:532.85px;background:#fa7d1e;line-height:17.6px">重要客户</div>
<div class="cell" style="left:470.30px;top:529.45px;height:22.05px;line-height:22.05px">示例：无锡公海池</div>
<div class="cell" style="left:564.50px;top:529.45px;height:22.05px;line-height:22.05px">客户未重复</div>
<div class="cell" style="left:657.90px;top:529.45px;height:22.05px;line-height:22.05px"><span class="a" style="width:80.67px"><span class="ai" style="font-size:9.60px;transform:scaleX(0.905)">2024-03-16&nbsp;16:36:56</span></span></div>
<div class="itag" style="left:752.00px;top:532.95px;background:#3b86f7;line-height:17.8px;width:80px;"><span class="a" style="width:10.96px"><span class="ai" style="font-size:9.40px;transform:scaleX(1.000)">IT/</span></span>通信<span class="a" style="width:2.61px"><span class="ai" style="font-size:9.40px;transform:scaleX(1.000)">/</span></span>电子<span class="a" style="width:2.61px"><span class="ai" style="font-size:9.40px;transform:scaleX(1.000)">/</span></span>互<span class="a" style="width:7.83px"><span class="ai" style="font-size:9.40px;transform:scaleX(1.000)">...</span></span></div>
<div class="cell" style="left:845.90px;top:529.45px;height:22.05px;line-height:22.05px"><span class="a" style="width:56.63px"><span class="ai" style="font-size:9.60px;transform:scaleX(0.905)">555@163.com</span></span></div>
<div class="cell" style="left:940.40px;top:529.45px;height:22.05px;line-height:22.05px">北京市朝阳区</div>
<div class="cell" style="left:1096.30px;top:529.45px;height:22.05px;line-height:22.05px">软硬件集成商</div>
<svg class="abs" style="left:449px;top:270.45px" width="9" height="9" viewBox="0 0 9 9"><path d="M1 6.6L5.8 1.8L7.2 3.2L2.4 8H1Z M1 8.4H8" fill="none" stroke="#6b7280" stroke-width="0.85"/></svg>
</body></html>
